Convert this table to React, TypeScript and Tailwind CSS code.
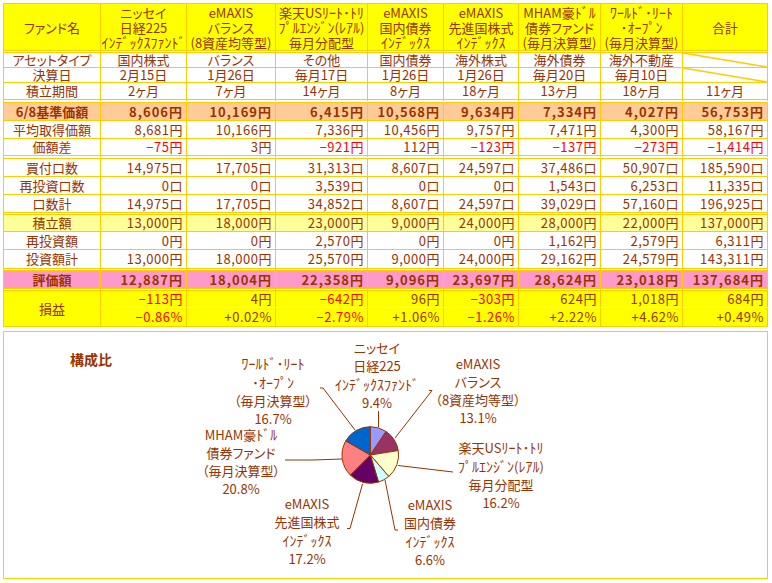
import clsx from "clsx";

type RowDef = {
  label: string;
  vals: (string | null)[];
  h: string;
  bg?: string;
  bold?: boolean;
  center?: boolean;
};

const cell =
  "flex items-center whitespace-nowrap leading-[14px] border-r border-b border-[#ffcc00] bg-clip-padding";

const header: string[][] = [
  ["ファンド名"],
  ["ニッセイ", "日経225", "ｲﾝﾃﾞｯｸｽﾌｧﾝﾄﾞ"],
  ["eMAXIS", "バランス", "(8資産均等型)"],
  ["楽天USﾘｰﾄ･ﾄﾘ", "ﾌﾟﾙｴﾝｼﾞﾝ(ﾚｱﾙ)", "毎月分配型"],
  ["eMAXIS", "国内債券", "ｲﾝﾃﾞｯｸｽ"],
  ["eMAXIS", "先進国株式", "ｲﾝﾃﾞｯｸｽ"],
  ["MHAM豪ﾄﾞﾙ", "債券ファンド", "(毎月決算型)"],
  ["ﾜｰﾙﾄﾞ･ﾘｰﾄ", "･ｵｰﾌﾟﾝ", "(毎月決算型)"],
  ["合計"],
];

const rows: RowDef[] = [
  {
    label: "アセットタイプ",
    vals: ["国内株式", "バランス", "その他", "国内債券", "海外株式", "海外債券", "海外不動産", null],
    h: "h-[15px]",
    center: true,
  },
  {
    label: "決算日",
    vals: ["2月15日", "1月26日", "毎月17日", "1月26日", "1月26日", "毎月20日", "毎月10日", null],
    h: "h-[15px]",
    center: true,
  },
  {
    label: "積立期間",
    vals: ["2ヶ月", "7ヶ月", "14ヶ月", "8ヶ月", "18ヶ月", "13ヶ月", "18ヶ月", "11ヶ月"],
    h: "h-[20px] border-b-4 border-double",
    center: true,
  },
  {
    label: "6/8基準価額",
    vals: ["8,606円", "10,169円", "6,415円", "10,568円", "9,634円", "7,334円", "4,027円", "56,753円"],
    h: "h-[18px]",
    bg: "bg-[#ffcc99]",
    bold: true,
  },
  {
    label: "平均取得価額",
    vals: ["8,681円", "10,166円", "7,336円", "10,456円", "9,757円", "7,471円", "4,300円", "58,167円"],
    h: "h-[18px]",
  },
  {
    label: "価額差",
    vals: ["−75円", "3円", "−921円", "112円", "−123円", "−137円", "−273円", "−1,414円"],
    h: "h-[20px] border-b-4 border-double",
  },
  {
    label: "買付口数",
    vals: ["14,975口", "17,705口", "31,313口", "8,607口", "24,597口", "37,486口", "50,907口", "185,590口"],
    h: "h-[18px]",
  },
  {
    label: "再投資口数",
    vals: ["0口", "0口", "3,539口", "0口", "0口", "1,543口", "6,253口", "11,335口"],
    h: "h-[18px]",
  },
  {
    label: "口数計",
    vals: ["14,975口", "17,705口", "34,852口", "8,607口", "24,597口", "39,029口", "57,160口", "196,925口"],
    h: "h-[20px] border-b-[3px] border-double",
  },
  {
    label: "積立額",
    vals: ["13,000円", "18,000円", "23,000円", "9,000円", "24,000円", "28,000円", "22,000円", "137,000円"],
    h: "h-[17px]",
    bg: "bg-[#ffff99]",
  },
  {
    label: "再投資額",
    vals: ["0円", "0円", "2,570円", "0円", "0円", "1,162円", "2,579円", "6,311円"],
    h: "h-[18px]",
  },
  {
    label: "投資額計",
    vals: ["13,000円", "18,000円", "25,570円", "9,000円", "24,000円", "29,162円", "24,579円", "143,311円"],
    h: "h-[21px] border-b-[3px] border-double",
  },
  {
    label: "評価額",
    vals: ["12,887円", "18,004円", "22,358円", "9,096円", "23,697円", "28,624円", "23,018円", "137,684円"],
    h: "h-[20px] border-b-[3px] border-double",
    bg: "bg-[#ff99cc]",
    bold: true,
  },
];

const profit = ["−113円", "4円", "−642円", "96円", "−303円", "624円", "1,018円", "684円"];
const profitPct = ["−0.86%", "+0.02%", "−2.79%", "+1.06%", "−1.26%", "+2.22%", "+4.62%", "+0.49%"];

const isNeg = (v: string) => v.startsWith("−");

function Diagonal() {
  return (
    <svg className="absolute inset-0 h-full w-full" preserveAspectRatio="none" viewBox="0 0 100 100">
      <line x1="0" y1="0" x2="100" y2="100" stroke="#ffcc00" strokeWidth="1.6" vectorEffect="non-scaling-stroke" />
    </svg>
  );
}

// half-width katakana runs look tiny in Noto, so they get a slightly bigger size
function Line({ text }: { text: string }) {
  const parts = text.split(/([\uff61-\uff9f]+)/).filter(Boolean);
  return (
    <span className="block">
      {parts.map((p, i) =>
        /[\uff61-\uff9f]/.test(p) ? (
          <span key={i} className="text-[14px] [font-feature-settings:normal]">
            {p}
          </span>
        ) : (
          <span key={i}>{p}</span>
        ),
      )}
    </span>
  );
}

function TableRow({ r }: { r: RowDef }) {
  return (
    <>
      <div className={clsx(cell, r.h, r.bg, "justify-center", r.bold && "font-bold")}>{r.label}</div>
      {r.vals.map((v, i) =>
        v === null ? (
          <div key={i} className={clsx(cell, r.h, "relative bg-white")}>
            <Diagonal />
          </div>
        ) : (
          <div
            key={i}
            className={clsx(
              cell,
              r.h,
              r.bg,
              r.center ? "justify-center" : "justify-end pr-[3px] tracking-[0.5px]",
              r.bold && "font-bold tracking-[1px]",
              isNeg(v) && "text-[#ff0000]",
            )}
          >
            {v}
          </div>
        ),
      )}
    </>
  );
}

// pie chart, page coordinates (svg viewBox starts at the chart box's inner corner)
const slices = [
  { v: 9.4, c: "#9999ff" },
  { v: 13.1, c: "#993366" },
  { v: 16.2, c: "#ffffcc" },
  { v: 6.6, c: "#ccffff" },
  { v: 17.2, c: "#660066" },
  { v: 20.8, c: "#ff8080" },
  { v: 16.7, c: "#0066cc" },
];

function piePaths(cx: number, cy: number, r: number) {
  let a = -90;
  return slices.map((s) => {
    const a0 = (a * Math.PI) / 180;
    a += s.v * 3.6;
    const a1 = (a * Math.PI) / 180;
    const large = s.v * 3.6 > 180 ? 1 : 0;
    const d = `M${cx} ${cy} L${cx + r * Math.cos(a0)} ${cy + r * Math.sin(a0)} A${r} ${r} 0 ${large} 1 ${cx + r * Math.cos(a1)} ${cy + r * Math.sin(a1)} Z`;
    return { d, c: s.c };
  });
}

const leaders = [
  "320,388 323,388 355,430",
  "378.5,411 378.5,427",
  "429,390.5 432,390.5 395,438",
  "398,465.5 453,472",
  "385,480 395,530 398,530",
  "362.5,484 350,528.5 347,528.5",
  "285,460 313,460 342,459",
];

function Label({ className, lines }: { className: string; lines: string[] }) {
  return (
    <div className={clsx("absolute w-[130px] text-center text-[13px] leading-[18px] whitespace-nowrap", className)}>
      {lines.map((l, i) => (
        <Line key={i} text={l} />
      ))}
    </div>
  );
}

export default function App() {
  return (
    <div className="min-h-[583px] w-[772px] bg-white pt-[3px] text-[13px] text-[#993300] [font-family:'Noto_Sans_CJK_JP',sans-serif] [font-feature-settings:'palt']">
      <div className="ml-[3px] grid w-[765px] grid-cols-[97px_86px_89px_92px_76px_75px_82px_82px_85px] border-t border-l border-[#ffcc00] bg-white">
        {header.map((h, i) => (
          <div
            key={i}
            className={clsx(
              cell,
              "h-[49px] flex-col justify-center border-b-[3px] border-double bg-[#ffff00] text-center leading-[15px]",
            )}
          >
            {h.map((l, j) => (
              <Line key={j} text={l} />
            ))}
          </div>
        ))}

        {rows.map((r) => (
          <TableRow key={r.label} r={r} />
        ))}

        <div className={clsx(cell, "row-span-2 justify-center bg-[#ffff00]")}>損益</div>
        {profit.map((v, i) => (
          <div
            key={i}
            className={clsx(
              cell,
              "h-[17px] justify-end bg-[#ffff00] pr-[3px] tracking-[0.5px] border-b-white [border-bottom-style:dashed]",
              isNeg(v) && "text-[#ff0000]",
            )}
          >
            {v}
          </div>
        ))}
        {profitPct.map((v, i) => (
          <div
            key={i}
            className={clsx(
              cell,
              "h-[19px] justify-end bg-[#ffff00] pr-[3px] tracking-[0.5px]",
              isNeg(v) && "text-[#ff0000]",
            )}
          >
            {v}
          </div>
        ))}
      </div>

      <div className="relative mt-[4px] ml-[3px] h-[248px] w-[765px] border border-[#ffcc00] bg-white">
        <div className="absolute top-[18px] left-[66px] text-[14px] leading-[18px] font-bold">構成比</div>

        <svg className="absolute top-0 left-0" width={763} height={246} viewBox="4 332 763 246">
          {piePaths(370.3, 455, 28.3).map((p, i) => (
            <path key={i} d={p.d} fill={p.c} stroke="#993300" strokeWidth={1} strokeLinejoin="round" />
          ))}
          {leaders.map((pts, i) => (
            <polyline key={i} points={pts} fill="none" stroke="#993300" strokeWidth={1} />
          ))}
        </svg>

        <Label className="top-[22px] left-[204px]" lines={["ﾜｰﾙﾄﾞ･ﾘｰﾄ", "･ｵｰﾌﾟﾝ", "（毎月決算型）", "16.7%"]} />
        <Label className="top-[7px] left-[308px]" lines={["ニッセイ", "日経225", "ｲﾝﾃﾞｯｸｽﾌｧﾝﾄﾞ", "9.4%"]} />
        <Label className="top-[23px] left-[409px]" lines={["eMAXIS", "バランス", "（8資産均等型）", "13.1%"]} />
        <Label className="top-[106px] left-[432px]" lines={["楽天USﾘｰﾄ･ﾄﾘ", "ﾌﾟﾙｴﾝｼﾞﾝ(ﾚｱﾙ)", "毎月分配型", "16.2%"]} />
        <Label className="top-[164px] left-[361px]" lines={["eMAXIS", "国内債券", "ｲﾝﾃﾞｯｸｽ", "6.6%"]} />
        <Label className="top-[163px] left-[238px]" lines={["eMAXIS", "先進国株式", "ｲﾝﾃﾞｯｸｽ", "17.2%"]} />
        <Label className="top-[93px] left-[172px]" lines={["MHAM豪ﾄﾞﾙ", "債券ファンド", "（毎月決算型）", "20.8%"]} />
      </div>
    </div>
  );
}
